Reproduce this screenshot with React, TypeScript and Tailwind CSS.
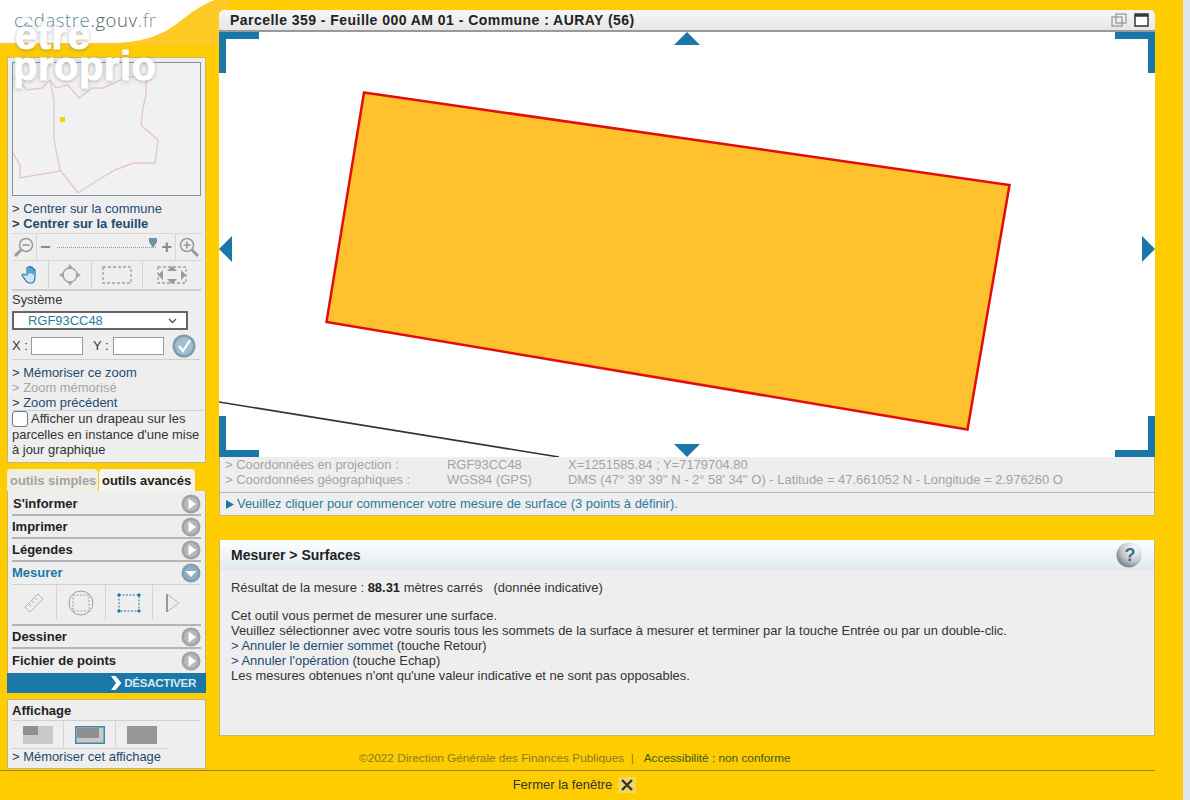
import React from "react";

const Arrow = ({ down = false }: { down?: boolean }) => (
  <svg width="20" height="20" viewBox="0 0 20 20" className="shrink-0">
    <circle cx="10" cy="10" r="9.5" fill={down ? "#7f9fb0" : "#a3a3a3"} />
    <circle cx="10" cy="10" r="7" fill={down ? "#8fb0c2" : "#b8b8b8"} />
    {down ? <path d="M4.5 8 H15.5 L10 14 Z" fill="#fff" /> : <path d="M7.5 4.5 V15.5 L15 10 Z" fill="#fff" />}
  </svg>
);

const MenuRow = ({ label, first = false }: { label: string; first?: boolean }) => (
  <div className="h-[23px] flex items-center justify-between border-b-2 border-[#b5b5b5] mx-[4px]">
    <span className={`font-bold text-[13px] text-[#222] ${first ? "ml-px" : ""}`}>{label}</span>
    <Arrow />
  </div>
);

const Link = ({ children, bold = false, gray = false }: { children: string; bold?: boolean; gray?: boolean }) => (
  <div className={`h-[15px] leading-[15px] text-[12.95px] whitespace-nowrap ${bold ? "font-bold" : ""} ${gray ? "text-[#a5a5a5]" : "text-[#1d4a70]"}`}>
    <span className={gray ? "" : "text-[#333]"}>{"> "}</span>
    {children}
  </div>
);

const Cell = ({ w, children, last = false }: { w: string; children: React.ReactNode; last?: boolean }) => (
  <div className={`${w} h-full flex items-center justify-center ${last ? "" : "border-r border-[#d4d4d4]"}`}>{children}</div>
);

const Mag = ({ plus = false }: { plus?: boolean }) => (
  <svg width="22" height="22" viewBox="0 0 22 22" fill="none" stroke="#9a9a9a">
    {plus ? (
      <>
        <circle cx="9" cy="9" r="6.5" strokeWidth="1.5" />
        <path d="M14 14 L20 20" strokeWidth="3" />
        <path d="M5.5 9H12.5M9 5.5V12.5" strokeWidth="1.6" />
      </>
    ) : (
      <>
        <circle cx="13" cy="9" r="6.5" strokeWidth="1.5" />
        <path d="M8 14 L2 20" strokeWidth="3" />
        <path d="M9.5 9H16.5" strokeWidth="1.6" />
      </>
    )}
  </svg>
);

const Corner = ({ cls, d }: { cls: string; d: string }) => (
  <svg width="40" height="41" viewBox="0 0 40 41" className={`absolute ${cls}`}>
    <path d={d} fill="#1b77a8" />
  </svg>
);

const Layout = ({ kind }: { kind: number }) => (
  <svg width="30" height="18" viewBox="0 0 30 18">
    {kind === 0 && (
      <>
        <rect width="30" height="18" fill="#c9c9c9" />
        <rect width="15" height="9" fill="#8f8f8f" />
      </>
    )}
    {kind === 1 && (
      <>
        <rect x="0.75" y="0.75" width="28.5" height="16.5" fill="#c9c9c9" stroke="#3e88ad" strokeWidth="1.5" />
        <rect x="2" y="2" width="22" height="10" fill="#8f8f8f" />
      </>
    )}
    {kind === 2 && <rect width="30" height="18" fill="#969696" />}
  </svg>
);

export default function App() {
  return (
    <div className="relative w-[1190px] h-[800px] overflow-hidden bg-[#ffcc00] font-['Liberation_Sans',Arial,sans-serif] text-[12.95px] text-[#333]">
      {/* banner curve */}
      <svg width="230" height="46" viewBox="0 0 230 46" className="absolute left-0 top-0">
        <path d="M215 0 H230 V46 H0 V43 H110 C140 43 160 36 175 25 C190 14 200 5 215 0 Z" fill="#ffc926" />
        <path d="M0 0 H215 C200 5 190 14 175 25 C160 36 140 43 110 43 H0 Z" fill="#fff" />
      </svg>
      <div className="absolute left-[14px] top-[8px] text-[18.5px] leading-[24px] tracking-[0.6px] text-[#5d8aa0] font-['Open_Sans',sans-serif] font-light">
        cadastre<span className="text-[#55606a]">.gouv</span><span className="text-[#8a949b]">.fr</span>
      </div>

      <div className="absolute inset-y-0 right-0 w-[7px] bg-[#dde6ea]" />

      <div className="relative flex h-[771px] pt-[10px] border-b border-[#9a8420] w-[1155px]">
        {/* left column */}
        <div className="w-[219px] shrink-0 pl-[7px] pr-[13px] pt-[47px]">
          <div className="h-[406px] bg-[#eeeeee] border border-[#c7b774] px-[4px] pt-[4px]">
            <div className="h-[134px] w-[189px] border border-[#8a8f94] bg-[#f1f1f3]">
              <svg width="187" height="132" viewBox="0 0 187 132" fill="none" stroke="#e3c9c5" strokeWidth="1.4">
                <path d="M0 15 L7 19 L14 27 L29 25 L37 17 L43 25 L55 22 L66 35 L79 25 L90 25 L112 15 L133 12 L133 32 L130 45 L128 62 L145 77 L142 100 L120 100 L102 107 L85 117 L65 130" />
                <path d="M37 17 L41 37 L41 77 L47 107 L65 130" />
                <path d="M47 108 L7 115 L7 102 L0 90" />
              </svg>
            </div>
            <div className="relative">
              <div className="absolute left-[48px] -top-[79px] w-[5px] h-[5px] bg-[#f2d500]" />
            </div>
            <div className="mt-[5px]">
              <Link>Centrer sur la commune</Link>
              <Link bold>Centrer sur la feuille</Link>
            </div>
            <div className="mt-[2px] h-[28px] flex items-center border-y border-[#d8d8d8] -mr-px">
              <Cell w="w-[25px]"><Mag /></Cell>
              <div className="w-[139px] h-full flex items-center pl-[3px] pr-[3px] border-r border-[#d4d4d4] relative">
                <span className="text-[#8a8a8a] font-bold text-[18px] leading-none">−</span>
                <div className="ml-[6px] mr-[5px] flex-1 border-t border-dotted border-[#999]" />
                <span className="text-[#8a8a8a] font-bold text-[18px] leading-none">+</span>
                <svg width="8" height="10" viewBox="0 0 8 10" className="absolute right-[18px] top-[4px]"><path d="M0 0H8V4L4 10L0 4Z" fill="#6f939e" /></svg>
              </div>
              <div className="flex-1 flex items-center justify-center"><Mag plus /></div>
            </div>
            <div className="h-[30px] flex items-center border-b-2 border-[#cfcfcf]">
              <Cell w="w-[37px]">
                <svg width="18" height="20" viewBox="0 0 18 20" fill="#cfe6f2" stroke="#1b77a8" strokeWidth="1.2" strokeLinejoin="round">
                  <path d="M6 10 V3 Q7 1.5 8 3 V8 V2 Q9 1 10 2 V8 V3 Q11 2 12 3 V9 V5 Q13 4 14 5 V12 Q14 17 11 18 H8 Q5 17 3 13 L1 10 Q2 8 4 10 Z" />
                </svg>
              </Cell>
              <Cell w="w-[43px]">
                <svg width="24" height="24" viewBox="0 0 24 24" fill="none" stroke="#a5a5a5" strokeWidth="1.3">
                  <circle cx="12" cy="12" r="7" />
                  <path d="M12 1L15 6H9ZM12 23L15 18H9ZM1 12L6 9V15ZM23 12L18 9V15Z" fill="#a5a5a5" stroke="none" />
                </svg>
              </Cell>
              <Cell w="w-[51px]">
                <svg width="30" height="18" viewBox="0 0 30 18" fill="none" stroke="#a0a0a0" strokeWidth="1.3" strokeDasharray="3 2"><rect x="1" y="1" width="28" height="16" /></svg>
              </Cell>
              <Cell w="w-[58px]" last>
                <svg width="32" height="20" viewBox="0 0 32 20" fill="none" stroke="#a0a0a0" strokeWidth="1.3">
                  <rect x="2" y="2" width="28" height="16" strokeDasharray="3 2" />
                  <path d="M11 6H21L16 1ZM11 14H21L16 19ZM7 5V15L2 10ZM25 5V15L30 10Z" fill="#999" stroke="none" />
                </svg>
              </Cell>
            </div>
            <div className="h-[18px] leading-[18px]">Système</div>
            <div className="mt-[2px] w-[176px] h-[19px] bg-white border-2 border-[#666] flex items-center justify-between pl-[14px] pr-[9px] text-[#2a7a9e]">
              <span>RGF93CC48</span>
              <svg width="9" height="6" viewBox="0 0 9 6" fill="none" stroke="#456" strokeWidth="1.3"><path d="M1 1L4.5 4.5L8 1" /></svg>
            </div>
            <div className="mt-[6px] h-[20px] flex items-center">
              <span className="w-[19px]">X :</span>
              <div className="w-[52px] h-[18px] bg-white border border-[#999]" />
              <span className="ml-[10px] w-[20px]">Y :</span>
              <div className="w-[51px] h-[18px] bg-white border border-[#999]" />
              <svg width="24" height="24" viewBox="0 0 24 24" className="ml-[8px]">
                <circle cx="12" cy="12" r="11.5" fill="#7f9fb0" />
                <circle cx="12" cy="12" r="9" fill="#a3bfce" />
                <path d="M7 12L11 17L18 6" stroke="#fff" strokeWidth="2.2" fill="none" />
              </svg>
            </div>
            <div className="mt-[3px] border-t border-[#d0d0d0] pt-[5px]">
              <Link>Mémoriser ce zoom</Link>
              <Link gray>Zoom mémorisé</Link>
              <Link>Zoom précédent</Link>
            </div>
            <div className="border-t border-[#d0d0d0] leading-[15px] -mr-[2px] whitespace-nowrap">
              <span className="inline-block align-top w-[16px] h-[16px] bg-white border border-[#777] rounded-[3px] mr-[3px]" />
              Afficher un drapeau sur les
              <br />
              parcelles en instance d'une mise
              <br />
              à jour graphique
            </div>
          </div>

          <div className="mt-[6px] h-[22px] flex items-end">
            <div className="w-[91px] h-[22px] bg-[#f0eee2] rounded-t-[4px] text-[#a2a2a2] font-bold leading-[24px] pl-[3px] whitespace-nowrap">outils simples</div>
            <div className="ml-[1px] w-[96px] h-[22px] bg-[#f4f4f0] rounded-t-[4px] text-[#222] font-bold leading-[24px] pl-[3px] whitespace-nowrap">outils avancés</div>
          </div>
          <div className="h-[202px] bg-[#eeeeee] border-x border-[#c7b774] pt-[2px]">
            <MenuRow label="S'informer" first />
            <MenuRow label="Imprimer" />
            <MenuRow label="Légendes" />
            <div className="h-[23px] flex items-center justify-between border-b border-[#d0d0d0] mx-[4px]">
              <span className="font-bold text-[13px] text-[#1b77a8]">Mesurer</span>
              <Arrow down />
            </div>
            <div className="h-[41px] mx-[4px] border-b-2 border-[#b5b5b5] pb-[5px]">
              <div className="h-[35px] flex items-center">
                <Cell w="w-[45px]">
                  <svg width="22" height="22" viewBox="0 0 22 22" fill="none" stroke="#b5b5b5"><path d="M2 15L15 2L20 7L7 20Z" /><path d="M6 12L8 14M9 9L11 11M12 6L14 8" /></svg>
                </Cell>
                <Cell w="w-[49px]">
                  <svg width="26" height="26" viewBox="0 0 26 26" fill="none" stroke="#a0a0a0"><circle cx="13" cy="13" r="12" /><rect x="5" y="5" width="16" height="16" strokeDasharray="2 1.5" /></svg>
                </Cell>
                <Cell w="w-[47px]">
                  <svg width="24" height="20" viewBox="0 0 24 20" fill="none" stroke="#1b77a8"><rect x="2" y="2" width="20" height="16" strokeDasharray="2 1.5" /><path d="M1 1H3V3H1ZM21 1H23V3H21ZM1 17H3V19H1ZM21 17H23V19H21Z" fill="#1b77a8" /></svg>
                </Cell>
                <Cell w="w-[48px]" last>
                  <svg width="16" height="20" viewBox="0 0 16 20" fill="none" className="mr-[8px]"><path d="M2 1V19" stroke="#999" strokeWidth="2" /><path d="M3 2L14 10L3 18" stroke="#b5b5b5" /></svg>
                </Cell>
              </div>
            </div>
            <MenuRow label="Dessiner" />
            <div className="h-[23px] flex items-center justify-between mx-[4px]">
              <span className="font-bold text-[13px] text-[#222]">Fichier de points</span>
              <Arrow />
            </div>
            <div className="h-[20px] bg-[#1b77a8] -mx-px flex items-center justify-end pr-[10px] mt-[1px]">
              <svg width="12" height="14" viewBox="0 0 12 14" className="mr-[2px]"><path d="M1 0H5.5L11.5 7L5.5 14H1L6 7Z" fill="#fff" /></svg>
              <span className="text-[#d8e8f0] font-bold text-[11.6px] tracking-[-0.3px]">DÉSACTIVER</span>
            </div>
          </div>
          <div className="mt-[6px] h-[70px] bg-[#eeeeee] border border-[#c7b774] px-[4px]">
            <div className="h-[21px] leading-[22px] font-bold text-[13px] text-[#222] border-b border-[#d0d0d0]">Affichage</div>
            <div className="h-[27px] flex items-center">
              <Cell w="w-[52px]"><Layout kind={0} /></Cell>
              <Cell w="w-[52px]"><Layout kind={1} /></Cell>
              <div className="w-[52px] flex justify-center"><Layout kind={2} /></div>
            </div>
            <div className="w-[156px] border-t border-[#d0d0d0]">
              <Link>Mémoriser cet affichage</Link>
            </div>
          </div>
        </div>

        {/* main column */}
        <div className="w-[936px] shrink-0">
          <div className="h-[22px] rounded-t-[5px] bg-gradient-to-b from-[#f7f7f7] to-[#e6e6e6] border-b-2 border-[#9a9a9a] flex items-center justify-between pl-[11px] pr-[6px]">
            <span className="font-bold text-[14px] text-[#222] tracking-[0.46px] whitespace-nowrap">Parcelle 359 - Feuille 000 AM 01 - Commune : AURAY (56)</span>
            <div className="flex items-center gap-[7px]">
              <svg width="16" height="14" viewBox="0 0 16 14" fill="none" stroke="#9a9a9a" strokeWidth="1.3"><rect x="1" y="4" width="10" height="9" /><rect x="5" y="1" width="10" height="9" /></svg>
              <svg width="15" height="14" viewBox="0 0 15 14" fill="#fff" stroke="#333" strokeWidth="1.5"><rect x="1" y="1" width="13" height="12" /><path d="M1 2.5H14" strokeWidth="2.5" /></svg>
            </div>
          </div>

          <div className="relative h-[425px] bg-white overflow-hidden">
            <svg width="936" height="425" viewBox="0 0 936 425" className="absolute inset-0">
              <path d="M0 370 L340 425" stroke="#333" strokeWidth="1.6" fill="none" />
              <path d="M145 60.5 L790.5 153 L748.5 397.5 L107.5 290 Z" fill="#ffc22e" stroke="#e30d0d" strokeWidth="2.5" />
            </svg>
            <Corner cls="left-0 top-0" d="M0 0H40V7H7V41H0Z" />
            <Corner cls="right-0 top-0" d="M0 0H40V41H33V7H0Z" />
            <Corner cls="left-0 bottom-0" d="M0 0H7V34H40V41H0Z" />
            <Corner cls="right-0 bottom-0" d="M33 0H40V41H0V34H33Z" />
            <svg width="26" height="13" viewBox="0 0 26 13" className="absolute left-[455px] top-0"><path d="M13 0L26 13H0Z" fill="#1b77a8" /></svg>
            <svg width="26" height="13" viewBox="0 0 26 13" className="absolute left-[455px] bottom-0"><path d="M0 0H26L13 13Z" fill="#1b77a8" /></svg>
            <svg width="13" height="26" viewBox="0 0 13 26" className="absolute left-0 top-[204px]"><path d="M13 0V26L0 13Z" fill="#1b77a8" /></svg>
            <svg width="13" height="26" viewBox="0 0 13 26" className="absolute right-0 top-[204px]"><path d="M0 0L13 13L0 26Z" fill="#1b77a8" /></svg>
          </div>

          <div className="bg-[#eeeeee] border-x border-b border-[#c7b774]">
            <div className="h-[36px] pl-[5px] border-b border-[#b5b5b5] text-[#a3a3a3] leading-[15px]">
              <div className="flex whitespace-nowrap">
                <span className="w-[222px]">&gt; Coordonnées en projection :</span>
                <span className="w-[121px]">RGF93CC48</span>
                <span>X=1251585.84 ; Y=7179704.80</span>
              </div>
              <div className="flex whitespace-nowrap">
                <span className="w-[222px]">&gt; Coordonnées géographiques :</span>
                <span className="w-[121px]">WGS84 (GPS)</span>
                <span>DMS (47° 39' 39'' N - 2° 58' 34'' O) - Latitude = 47.661052 N - Longitude = 2.976260 O</span>
              </div>
            </div>
            <div className="h-[22px] pl-[6px] flex items-center text-[#2a7a9e] whitespace-nowrap">
              <svg width="8" height="9" viewBox="0 0 8 9" className="mr-[3px]"><path d="M0 0L8 4.5L0 9Z" fill="#1b77a8" /></svg>
              Veuillez cliquer pour commencer votre mesure de surface (3 points à définir).
            </div>
          </div>

          <div className="mt-[24px] h-[196px] bg-[#eeeeee] border-x border-b border-[#c7b774]">
            <div className="h-[30px] bg-gradient-to-b from-white to-[#dfe9ee] flex items-center justify-between pl-[11px] pr-[11px]">
              <span className="font-bold text-[14px] text-[#222]">Mesurer &gt; Surfaces</span>
              <svg width="28" height="26" viewBox="0 0 28 26">
                <defs>
                  <radialGradient id="q" cx="0.7" cy="0.25" r="0.9"><stop offset="0" stopColor="#ffffff" /><stop offset="0.55" stopColor="#c4c8ca" /><stop offset="1" stopColor="#5b6a72" /></radialGradient>
                </defs>
                <circle cx="14" cy="13" r="12.5" fill="url(#q)" />
                <text x="9.5" y="19" fontSize="18" fontWeight="700" fill="#3f7088" fontFamily="Liberation Sans">?</text>
              </svg>
            </div>
            <div className="pl-[11px] pt-[10px] leading-[15px] text-[#333] whitespace-nowrap">
              <div>Résultat de la mesure : <b className="text-[#222]">88.31</b> mètres carrés &nbsp; (donnée indicative)</div>
              <div className="mt-[13px]">Cet outil vous permet de mesurer une surface.</div>
              <div>Veuillez sélectionner avec votre souris tous les sommets de la surface à mesurer et terminer par la touche Entrée ou par un double-clic.</div>
              <div><span className="text-[#1d4a70]">&gt; Annuler le dernier sommet</span> (touche Retour)</div>
              <div><span className="text-[#1d4a70]">&gt; Annuler l'opération</span> (touche Echap)</div>
              <div>Les mesures obtenues n'ont qu'une valeur indicative et ne sont pas opposables.</div>
            </div>
          </div>

          <div className="mt-[15px] pl-[140px] flex text-[11.8px] leading-[15px] whitespace-nowrap">
            <span className="text-[#8a7a20]">©2022 Direction Générale des Finances Publiques &nbsp;|</span>
            <span className="ml-[10px] text-[#3a5a20]">Accessibilité : non conforme</span>
          </div>
        </div>
      </div>

      <div className="relative h-[28px] flex items-center justify-center w-[1149px] text-[13px] text-[#333]">
        Fermer la fenêtre
        <span className="ml-[6px] w-[18px] h-[16px] bg-[#f0d860] flex items-center justify-center">
          <svg width="12" height="12" viewBox="0 0 12 12" stroke="#333" strokeWidth="2.4"><path d="M1 1L11 11M11 1L1 11" /></svg>
        </span>
      </div>

      {/* watermark */}
      <div className="absolute left-[13px] top-[20px] text-white font-bold text-[40px] leading-[31px] tracking-[0.5px] font-['Liberation_Sans',sans-serif] [-webkit-text-stroke:1px_white] [text-shadow:0_1px_4px_rgba(90,90,90,0.55)] pointer-events-none">
        <div className="ml-[2px]">être</div>
        <div>proprio</div>
      </div>
    </div>
  );
}
